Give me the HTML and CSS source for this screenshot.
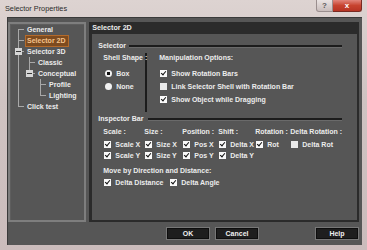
FILE: index.html
```html
<!DOCTYPE html>
<html lang="en">
<head>
    <meta charset="UTF-8">
    <meta name="viewport" content="width=device-width, initial-scale=1.0">
    <title>Selector Properties</title>
    <link rel="stylesheet" href="styles.css">
</head>
<body>
    <div class="window">
        <div class="titlebar">
            <span class="title">Selector Properties</span>
            <div class="caption-btns">
                <span class="cap cap-help">?</span>
                <span class="cap cap-close">x</span>
            </div>
        </div>

        <div class="client">
            <div class="main">
                <ul class="tree">
                    <li class="node"><span class="g first"></span><span class="label">General</span></li>
                    <li class="node"><span class="g tee"></span><span class="label selected">Selector 2D</span></li>
                    <li class="node"><span class="g tee"><span class="minus"></span></span><span class="label">Selector 3D</span></li>
                    <li class="node"><span class="g line"></span><span class="g tee"></span><span class="label">Classic</span></li>
                    <li class="node"><span class="g line"></span><span class="g elbow"><span class="minus"></span></span><span class="label">Conceptual</span></li>
                    <li class="node"><span class="g line"></span><span class="g"></span><span class="g tee"></span><span class="label">Profile</span></li>
                    <li class="node"><span class="g line"></span><span class="g"></span><span class="g elbow"></span><span class="label">Lighting</span></li>
                    <li class="node"><span class="g elbow"></span><span class="label">Click test</span></li>
                </ul>

                <div class="panel">
                    <div class="panel-head">Selector 2D</div>
                    <div class="panel-body">
                        <div class="legend">Selector</div>
                        <div class="selector-group">
                            <div class="shell">
                                <div class="caption">Shell Shape :</div>
                                <div class="opt"><span class="radio on"></span>Box</div>
                                <div class="opt"><span class="radio"></span>None</div>
                            </div>
                            <div class="manip">
                                <div class="caption">Manipulation Options:</div>
                                <div class="opt"><span class="check on"></span>Show Rotation Bars</div>
                                <div class="opt"><span class="check"></span>Link Selector Shell with Rotation Bar</div>
                                <div class="opt"><span class="check on"></span>Show Object while Dragging</div>
                            </div>
                        </div>

                        <div class="legend legend-inspector">Inspector Bar</div>
                        <div class="inspector">
                            <div class="caption">Scale :</div>
                            <div class="caption">Size :</div>
                            <div class="caption">Position :</div>
                            <div class="caption">Shift :</div>
                            <div class="caption">Rotation :</div>
                            <div class="caption">Delta Rotation :</div>

                            <div class="opt"><span class="check on"></span>Scale X</div>
                            <div class="opt"><span class="check on"></span>Size X</div>
                            <div class="opt"><span class="check on"></span>Pos X</div>
                            <div class="opt"><span class="check on"></span>Delta X</div>
                            <div class="opt"><span class="check on"></span>Rot</div>
                            <div class="opt"><span class="check"></span>Delta Rot</div>

                            <div class="opt"><span class="check on"></span>Scale Y</div>
                            <div class="opt"><span class="check on"></span>Size Y</div>
                            <div class="opt"><span class="check on"></span>Pos Y</div>
                            <div class="opt"><span class="check on"></span>Delta Y</div>
                        </div>

                        <div class="caption move-caption">Move by Direction and Distance:</div>
                        <div class="move-row">
                            <div class="opt"><span class="check on"></span>Delta Distance</div>
                            <div class="opt"><span class="check on"></span>Delta Angle</div>
                        </div>
                    </div>
                </div>
            </div>

            <div class="buttons">
                <button class="btn btn-ok">OK</button>
                <button class="btn">Cancel</button>
                <button class="btn btn-help">Help</button>
            </div>
        </div>
    </div>
</body>
</html>
```

FILE: styles.css
```css
body {
    margin: 0;
    padding: 0;
    font-family: "Liberation Sans", Arial, sans-serif;
    background: #c9a9c2;
}
.window {
    width: 367px;
    height: 250px;
    box-sizing: border-box;
    padding: 0 5px 0 0;
    background: linear-gradient(#ddd3d1, #cfc3c2 40%, #cbbcbc);
}
.titlebar {
    height: 17px;
    display: flex;
    justify-content: space-between;
    align-items: flex-start;
    padding-left: 5px;
}
.title {
    line-height: 17px;
    font-size: 7.3px;
    color: #2a2a2a;
}
.caption-btns {
    display: flex;
}
.cap {
    height: 12px;
    line-height: 11px;
    text-align: center;
    font-size: 8px;
    font-weight: bold;
    box-sizing: border-box;
}
.cap-help {
    width: 17px;
    color: #5a5a5a;
    background: linear-gradient(#eae3e2, #c9bdbc);
    border: 1px solid #9a8e8e;
    border-top: none;
    border-radius: 0 0 0 3px;
}
.cap-close {
    width: 29px;
    color: #fff;
    background: linear-gradient(#e2857b, #c7432f 50%, #b73424);
    border: 1px solid #7a2a22;
    border-top: none;
    border-left: none;
    border-radius: 0 0 3px 0;
}

/* client area */
.client {
    height: 228px;
    margin-left: 7px;
    box-sizing: border-box;
    background: #565656;
    border-top: 1px solid #3a3a3a;
    border-left: 1px solid #3a3a3a;
    padding: 4px 3px 0 0;
    font-size: 7px;
    font-weight: bold;
    color: #ececec;
}
.main {
    display: flex;
    gap: 3px;
    height: 200px;
}

/* tree */
.tree {
    list-style: none;
    margin: 0;
    padding: 0 0 0 3px;
    width: 84px;
    box-sizing: border-box;
    border: 2px solid #7e7e7e;
    box-shadow: inset 1px 1px 0 #5e5e5e;
}
.node {
    display: flex;
    align-items: center;
    height: 11px;
}
.g {
    width: 11px;
    height: 11px;
    flex: none;
    display: flex;
    align-items: center;
    justify-content: center;
    background-repeat: no-repeat;
}
.g.line {
    background-image: linear-gradient(#a8a8a8, #a8a8a8);
    background-position: 5px 0;
    background-size: 1px 100%;
}
.g.tee {
    background-image: linear-gradient(#a8a8a8, #a8a8a8), linear-gradient(#a8a8a8, #a8a8a8);
    background-position: 5px 0, 5px 5px;
    background-size: 1px 100%, 6px 1px;
}
.g.elbow {
    background-image: linear-gradient(#a8a8a8, #a8a8a8), linear-gradient(#a8a8a8, #a8a8a8);
    background-position: 5px 0, 5px 5px;
    background-size: 1px 6px, 6px 1px;
}
.g.first {
    background-image: linear-gradient(#a8a8a8, #a8a8a8), linear-gradient(#a8a8a8, #a8a8a8);
    background-position: 5px 5px, 5px 5px;
    background-size: 1px 6px, 6px 1px;
}
.minus {
    width: 7px;
    height: 7px;
    margin-right: 1px;
    background: linear-gradient(#3a3a3a, #3a3a3a) center / 5px 1px no-repeat, #d6d6d6;
}
.label {
    margin-left: 1px;
    padding: 0 2px 0 1px;
    line-height: 10px;
    border: 1px solid transparent;
    white-space: nowrap;
}
.label.selected {
    background: #7d4b1f;
    border-color: #b46a2a;
    color: #f5c38c;
}

/* right panel */
.panel {
    flex: 1;
    display: flex;
    flex-direction: column;
    border: 2px solid #2b2b2b;
    border-top: none;
    border-left-width: 3px;
}
.panel-head {
    height: 12px;
    line-height: 11px;
    background: #2b2b2b;
    font-size: 7.2px;
}
.panel-body {
    padding: 7px 15px 0 6px;
}
.legend {
    display: flex;
    align-items: center;
    gap: 3px;
    height: 9px;
    line-height: 9px;
}
.legend::after {
    content: "";
    flex: 1;
    height: 2px;
    background: #1c1c1c;
    box-shadow: 0 1px 0 #6a6a6a;
}
.legend-inspector {
    margin-top: 2px;
}
.legend-inspector::after {
    margin-left: 2px;
}
.caption {
    height: 10px;
    line-height: 10px;
    white-space: nowrap;
}
.opt {
    display: flex;
    align-items: center;
    gap: 4px;
    height: 11px;
    white-space: nowrap;
}
.selector-group {
    display: flex;
    height: 59px;
    margin-top: 3px;
    padding-left: 5px;
}
.shell {
    width: 42px;
    border-right: 2px solid #1c1c1c;
}
.manip {
    padding-left: 12px;
}
.shell .opt,
.manip .opt {
    height: 13px;
}
.shell .caption,
.manip .caption {
    margin-bottom: 4px;
}
.shell .opt {
    padding-left: 2px;
}
.radio {
    width: 7px;
    height: 7px;
    border-radius: 50%;
    background: #f2f2f2;
    box-sizing: border-box;
    flex: none;
}
.radio.on {
    background: radial-gradient(circle, #111 0 1.6px, #f2f2f2 2px);
}
.check {
    position: relative;
    width: 7px;
    height: 7px;
    background: #e9e9e9;
    flex: none;
    margin-left: 1px;
}
.check.on {
    background: #fafafa;
}
.check.on::after {
    content: "";
    position: absolute;
    left: 2px;
    top: 0;
    width: 2px;
    height: 4px;
    border: solid #111;
    border-width: 0 1.5px 1.5px 0;
    transform: rotate(40deg);
}

.inspector {
    display: grid;
    grid-template-columns: 41px 38px 36px 37px 35px auto;
    grid-template-rows: 10px 13px 11px;
    align-items: end;
    margin-top: 4px;
    padding-left: 5px;
}
.move-caption {
    margin-top: 5px;
    padding-left: 5px;
}
.move-row {
    display: grid;
    grid-template-columns: 66px auto;
    margin-top: 1px;
    padding-left: 5px;
}

/* bottom buttons */
.buttons {
    display: flex;
    gap: 5px;
    margin-top: 5px;
    padding-left: 158px;
}
.btn {
    width: 44px;
    height: 13px;
    padding: 0;
    font-family: inherit;
    font-size: 7px;
    font-weight: bold;
    color: #f0f0f0;
    background: #1e1e1e;
    border: 1px solid #777;
    box-shadow: inset 0 0 0 1px #0e0e0e;
}
.btn-help {
    margin-left: auto;
}
```
